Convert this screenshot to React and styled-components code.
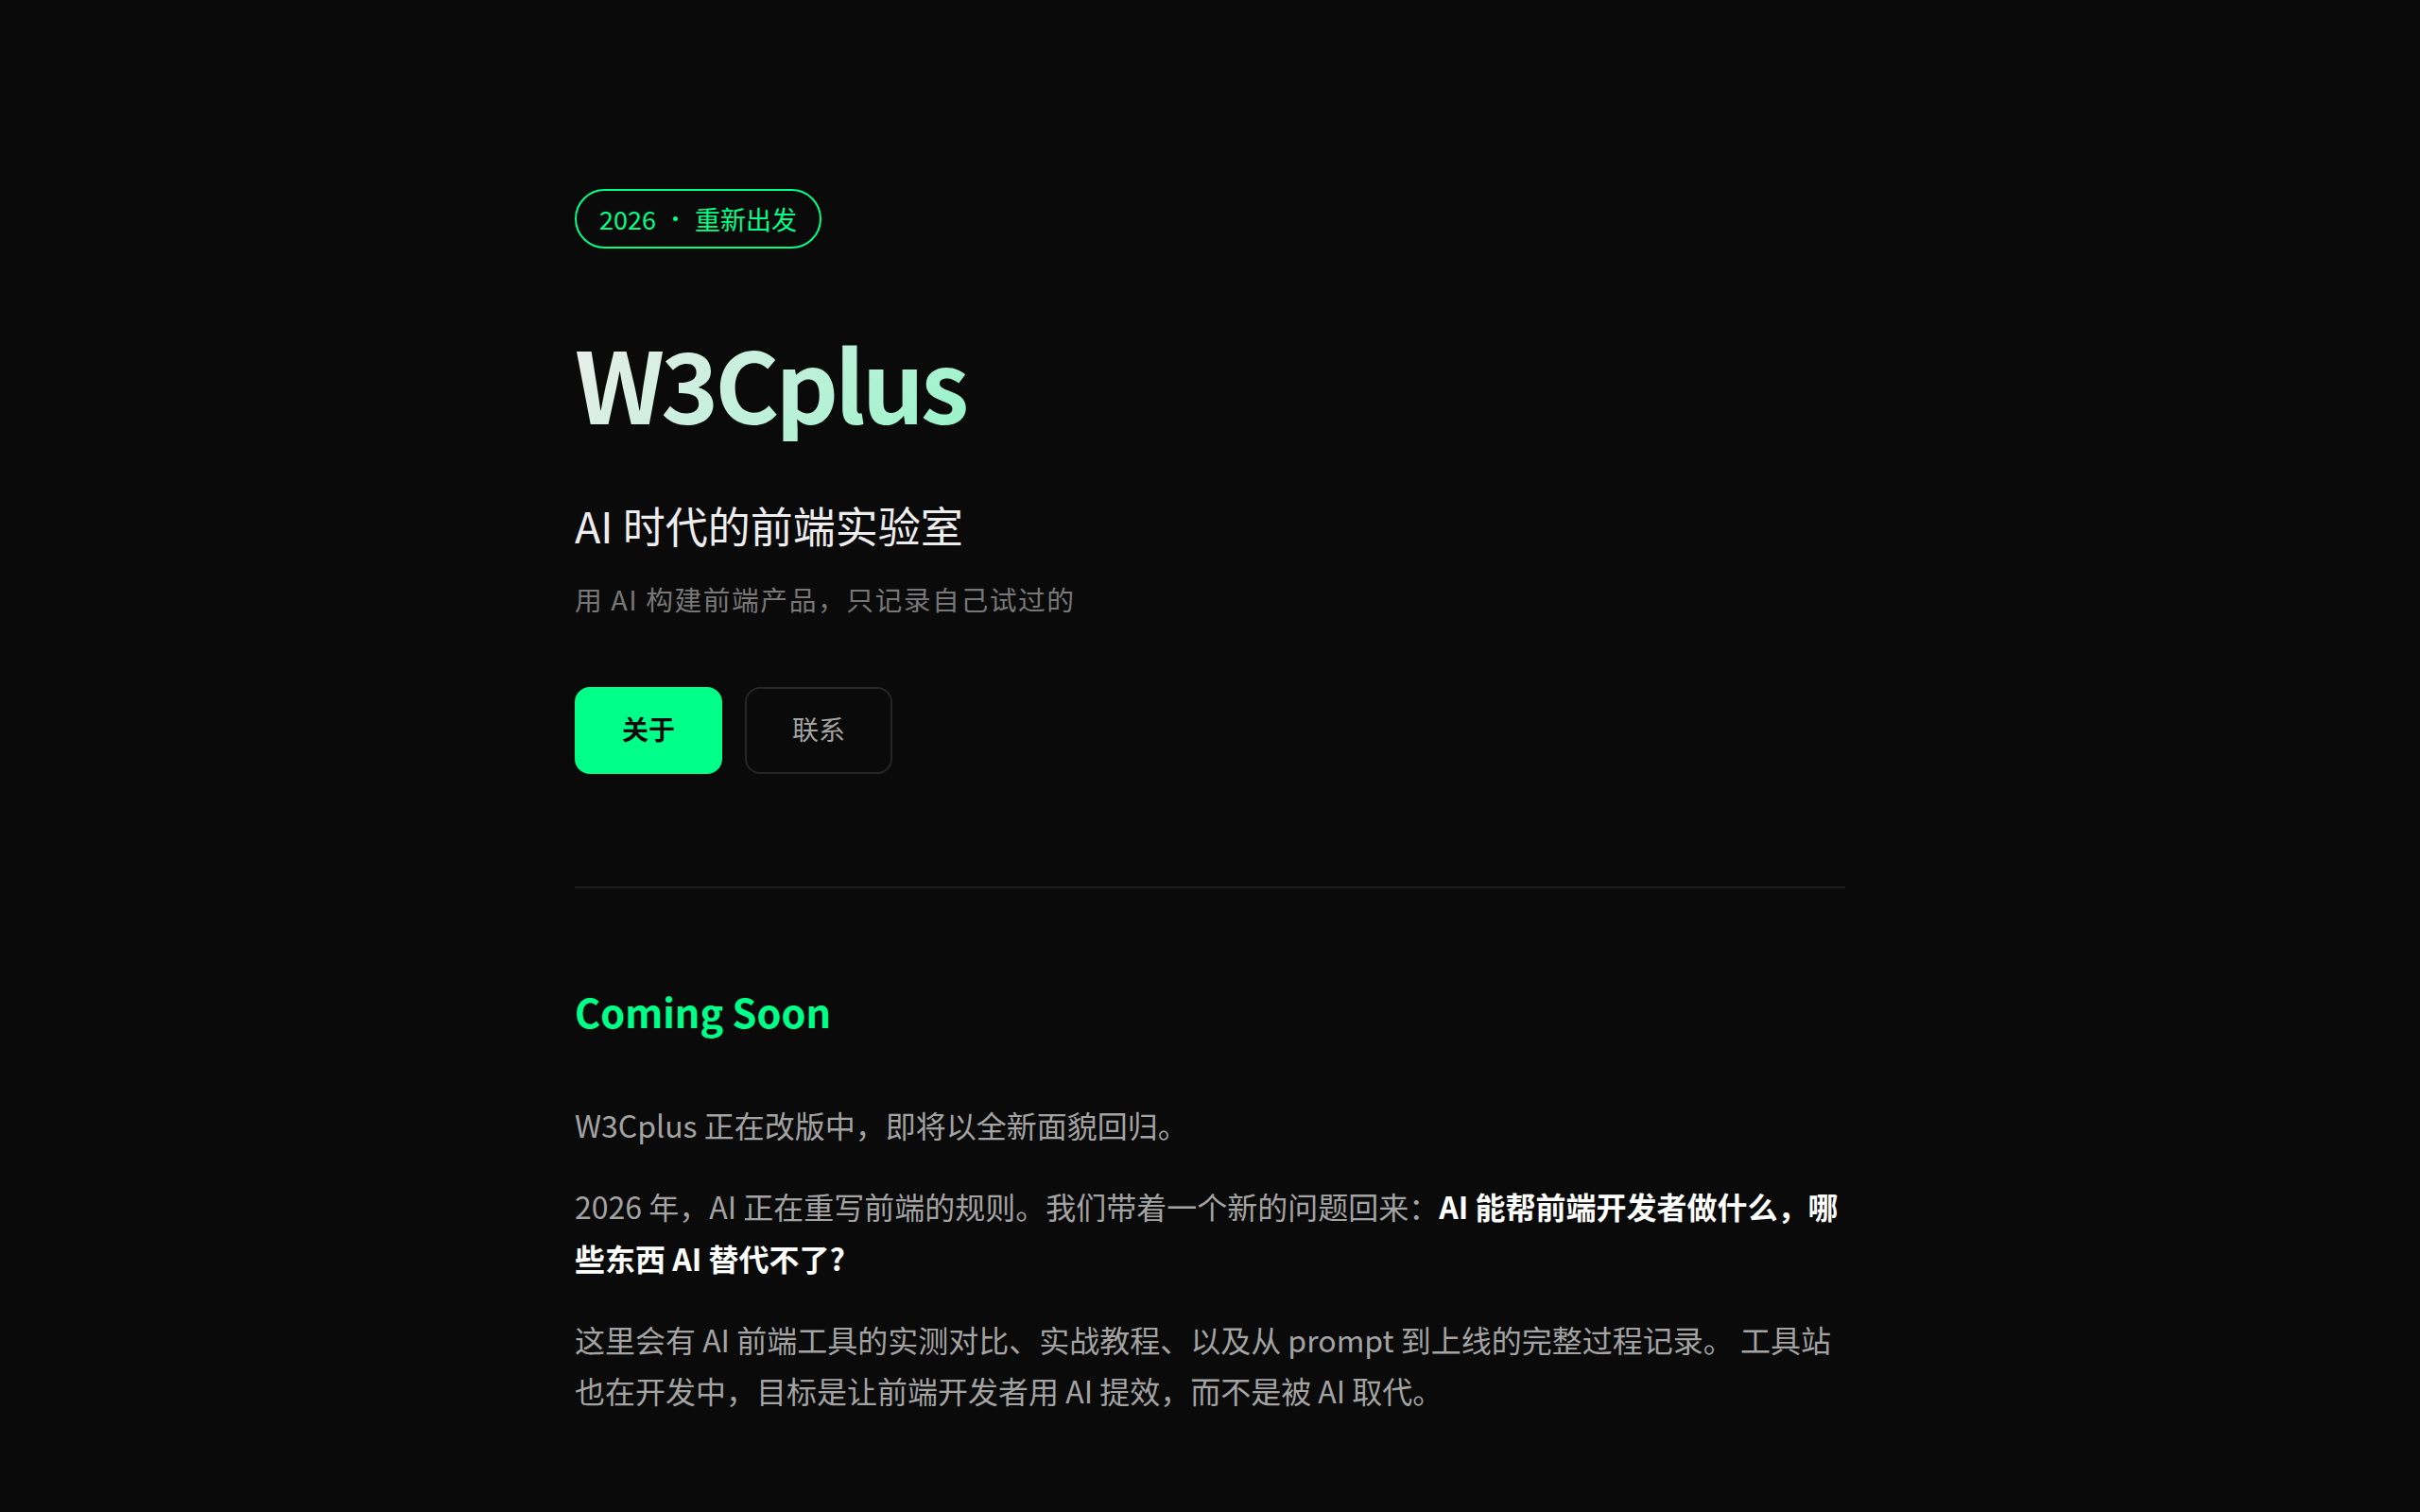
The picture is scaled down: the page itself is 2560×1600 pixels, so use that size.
import React from "react";
import styled, { createGlobalStyle } from "styled-components";

const GlobalStyle = createGlobalStyle`
  html, body {
    margin: 0;
    padding: 0;
    background: #0a0a0a;
  }
  body {
    font-family: "Noto Sans CJK SC", "Noto Sans", sans-serif;
    color: #a3a3a3;
    -webkit-font-smoothing: antialiased;
  }
  * { box-sizing: border-box; }
`;

const Page = styled.main`
  min-height: 1600px;
  background: #0a0a0a;
`;

const Container = styled.div`
  width: 1344px;
  margin: 0 auto;
  padding-top: 200px;
  padding-bottom: 120px;
`;

const Hero = styled.section`
  display: flex;
  flex-direction: column;
  align-items: flex-start;
`;

const Badge = styled.div`
  display: inline-flex;
  align-items: center;
  gap: 18px;
  height: 63px;
  padding: 0 24px;
  border: 2px solid #00ff88;
  border-radius: 999px;
  color: #00ff88;
  font-size: 27px;
  line-height: 1;
  white-space: nowrap;
`;

const Dot = styled.span`
  display: inline-block;
  width: 5px;
  height: 5px;
  border-radius: 50%;
  background: #00ff88;
`;

const Title = styled.h1`
  align-self: stretch;
  margin: 79px 0 0;
  font-size: 104px;
  line-height: 1.2;
  font-weight: 700;
  letter-spacing: -0.04em;
  background: linear-gradient(135deg, #ededed 0%, #00ff88 100%);
  -webkit-background-clip: text;
  background-clip: text;
  color: transparent;
`;

const Subtitle = styled.p`
  margin: 57px 0 0;
  font-size: 45px;
  line-height: 1.4;
  font-weight: 400;
  color: #ededed;
`;

const Tagline = styled.p`
  margin: 24px 0 0;
  font-size: 28.8px;
  line-height: 1.6;
  letter-spacing: 1.5px;
  color: #777777;
`;

const Actions = styled.div`
  display: flex;
  gap: 24px;
  margin-top: 70px;
`;

const Button = styled.a`
  display: inline-flex;
  align-items: center;
  justify-content: center;
  padding: 20px 48px 24px;
  line-height: 44px;
  font-size: 28px;
  border-radius: 16px;
  text-decoration: none;
  cursor: pointer;
  border: 2px solid ${(p) => (p.$primary ? "#00ff88" : "#262626")};
  background: ${(p) => (p.$primary ? "#00ff88" : "transparent")};
  color: ${(p) => (p.$primary ? "#0a0a0a" : "#a3a3a3")};
  font-weight: ${(p) => (p.$primary ? 700 : 400)};
`;

const Divider = styled.hr`
  margin: 119px 0 0;
  border: none;
  height: 2px;
  background: #1f1f1f;
`;

const Section = styled.section`
  margin-top: 104px;
`;

const SectionTitle = styled.h2`
  margin: 0;
  font-size: 41.5px;
  line-height: 1.3;
  font-weight: 700;
  color: #00ff88;
`;

const Body = styled.div`
  margin-top: 65px;
`;

const Paragraph = styled.p`
  margin: 0 0 32px;
  font-size: 32px;
  line-height: 1.7;
  color: #a3a3a3;
`;

const Strong = styled.strong`
  color: #ffffff;
  font-weight: 700;
`;

export default function App() {
  return (
    <Page>
      <GlobalStyle />
      <Container>
        <Hero>
          <Badge>
            <span>2026</span>
            <Dot />
            <span>重新出发</span>
          </Badge>
          <Title>W3Cplus</Title>
          <Subtitle>AI 时代的前端实验室</Subtitle>
          <Tagline>用 AI 构建前端产品，只记录自己试过的</Tagline>
          <Actions>
            <Button $primary href="#about">关于</Button>
            <Button href="#contact">联系</Button>
          </Actions>
        </Hero>
        <Divider />
        <Section>
          <SectionTitle>Coming Soon</SectionTitle>
          <Body>
            <Paragraph>W3Cplus 正在改版中，即将以全新面貌回归。</Paragraph>
            <Paragraph>
              2026 年，AI 正在重写前端的规则。我们带着一个新的问题回来：
              <Strong>AI 能帮前端开发者做什么，哪些东西 AI 替代不了?</Strong>
            </Paragraph>
            <Paragraph>
              这里会有 AI 前端工具的实测对比、实战教程、以及从 prompt 到上线的完整过程记录。 工具站也在开发中，目标是让前端开发者用 AI 提效，而不是被 AI 取代。
            </Paragraph>
          </Body>
        </Section>
      </Container>
    </Page>
  );
}
